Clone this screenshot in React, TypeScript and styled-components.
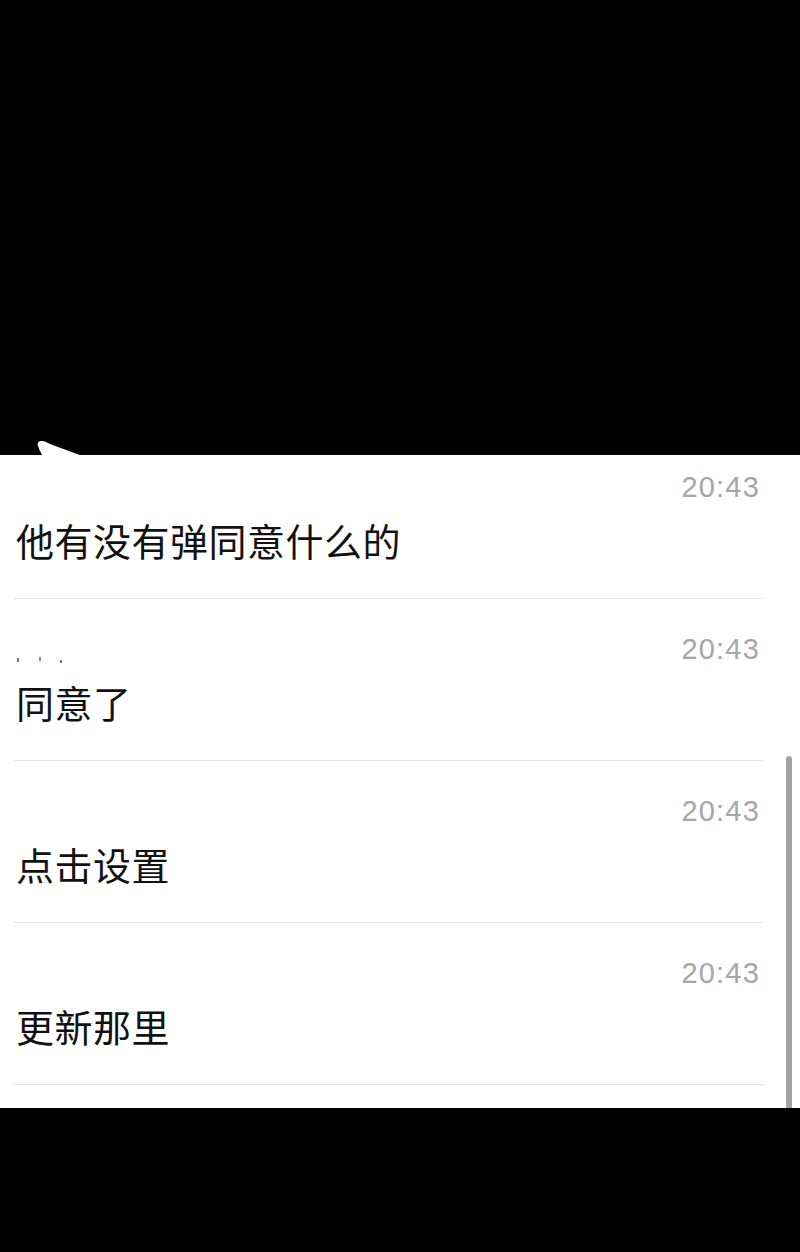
import React from "react";
import styled, { createGlobalStyle } from "styled-components";

const Global = createGlobalStyle`
  html, body { margin: 0; padding: 0; background: #000; }
  body { width: 800px; height: 1252px; overflow: hidden; }
`;

const Page = styled.div`
  width: 800px;
  height: 1252px;
  background: #000;
  display: flex;
  flex-direction: column;
`;

const TopBlack = styled.div`
  height: 455px;
  position: relative;
  flex: none;
`;

const Tail = styled.svg`
  position: absolute;
  left: 34px;
  bottom: 0;
`;

const Panel = styled.div`
  height: 653px;
  background: #fff;
  position: relative;
  overflow: hidden;
  flex: none;
`;

const List = styled.div`
  display: flex;
  flex-direction: column;
  margin-top: -18px;
`;

const Row = styled.div`
  height: 162px;
  box-sizing: border-box;
  position: relative;
  display: flex;
  flex-direction: column;
  padding: 33px 40px 0 16px;
  &::after {
    content: "";
    position: absolute;
    left: 14px;
    right: 37px;
    bottom: 0;
    height: 1px;
    background: #e3e3e3;
  }
`;

const Time = styled.div`
  align-self: flex-end;
  font-family: "Liberation Sans", "Helvetica", sans-serif;
  font-size: 29px;
  letter-spacing: 1.2px;
  line-height: 34px;
  color: #a6a6a6;
  height: 34px;
`;

const Msg = styled.div`
  margin-top: 13px;
  font-family: "Noto Sans CJK SC", "Noto Sans", sans-serif;
  font-size: 38px;
  line-height: 46px;
  color: #111;
  letter-spacing: 0.5px;
`;

const Marks = styled.svg`
  position: absolute;
  left: 16px;
  top: 55px;
`;

const Scrollbar = styled.div`
  position: absolute;
  right: 8px;
  top: 301px;
  width: 6px;
  bottom: 0;
  background: #a2a2a2;
  border-radius: 3px 3px 0 0;
`;

const BottomBlack = styled.div`
  flex: 1;
  background: #000;
`;

const rows = [
  { text: "他有没有弹同意什么的", marks: false },
  { text: "同意了", marks: true },
  { text: "点击设置", marks: false },
  { text: "更新那里", marks: false },
];

export default function App() {
  return (
    <>
      <Global />
      <Page>
        <TopBlack>
          <Tail width="50" height="16" viewBox="0 0 50 16">
            <path d="M4 7 C2 2, 8 1, 12 3 C20 7, 30 10, 46 16 L8 16 C6 12, 5 10, 4 7 Z" fill="#fff" />
          </Tail>
        </TopBlack>
        <Panel>
          <List>
            {rows.map((r, i) => (
              <Row key={i}>
                {r.marks && (
                  <Marks width="60" height="14" viewBox="0 0 60 14">
                    <rect x="1" y="4" width="2" height="4" fill="#777" />
                    <rect x="23" y="3" width="2" height="4" fill="#888" />
                    <rect x="44" y="6" width="2" height="3" fill="#777" />
                  </Marks>
                )}
                <Time>20:43</Time>
                <Msg>{r.text}</Msg>
              </Row>
            ))}
          </List>
          <Scrollbar />
        </Panel>
        <BottomBlack />
      </Page>
    </>
  );
}
